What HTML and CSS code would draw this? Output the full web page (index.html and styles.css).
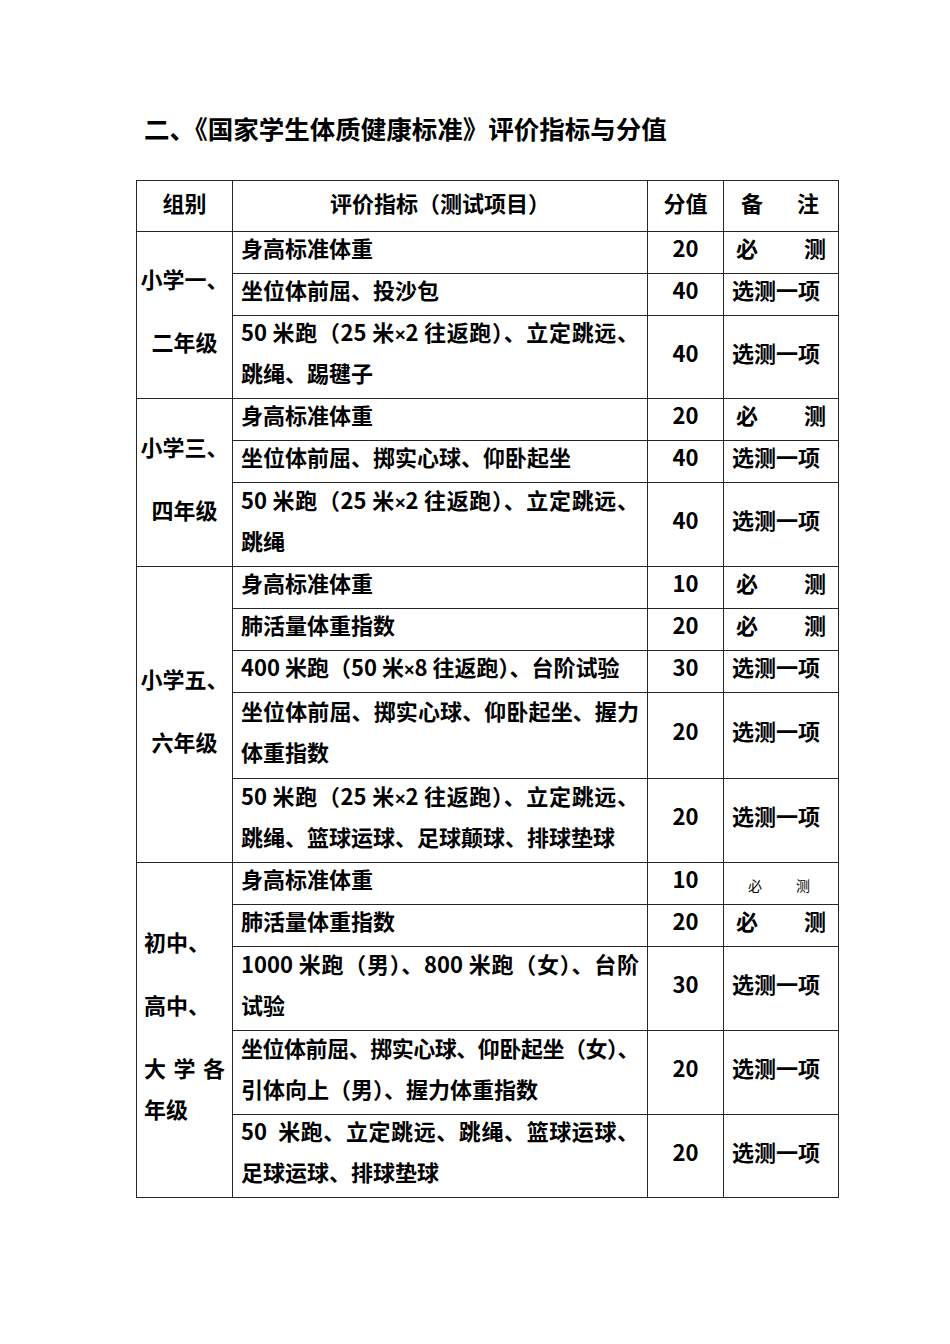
FILE: index.html
```html
<!DOCTYPE html>
<html lang="zh-CN">
<head>
<meta charset="utf-8">
<title>评价指标与分值</title>
<link rel="stylesheet" href="styles.css">
</head>
<body>
<div class="page">
  <h1 class="title">二、《国家学生体质健康标准》评价指标与分值</h1>
  <table class="tbl">
    <colgroup><col class="c1"><col class="c2"><col class="c3"><col class="c4"></colgroup>
    <thead>
      <tr class="h">
        <th><div class="in">组别</div></th>
        <th><div class="in">评价指标（测试项目）</div></th>
        <th><div class="in">分值</div></th>
        <th><div class="in sp hd"><span>备</span><span>注</span></div></th>
      </tr>
    </thead>
    <tbody>
      <!-- group 1 -->
      <tr class="s">
        <td rowspan="3" class="grp"><div class="in"><p>小学一、</p><p>二年级</p></div></td>
        <td class="item"><div class="in">身高标准体重</div></td>
        <td class="score"><div class="in">20</div></td>
        <td class="note"><div class="in sp"><span>必</span><span>测</span></div></td>
      </tr>
      <tr class="s">
        <td class="item"><div class="in">坐位体前屈、投沙包</div></td>
        <td class="score"><div class="in">40</div></td>
        <td class="note"><div class="in">选测一项</div></td>
      </tr>
      <tr class="d83">
        <td class="item"><div class="in"><span class="ln j">50 米跑（25 米<span class="x">×</span>2 往返跑）、立定跳远、</span><span class="ln">跳绳、踢毽子</span></div></td>
        <td class="score"><div class="in">40</div></td>
        <td class="note"><div class="in">选测一项</div></td>
      </tr>
      <!-- group 2 -->
      <tr class="s">
        <td rowspan="3" class="grp"><div class="in"><p>小学三、</p><p>四年级</p></div></td>
        <td class="item"><div class="in">身高标准体重</div></td>
        <td class="score"><div class="in">20</div></td>
        <td class="note"><div class="in sp"><span>必</span><span>测</span></div></td>
      </tr>
      <tr class="s">
        <td class="item"><div class="in">坐位体前屈、掷实心球、仰卧起坐</div></td>
        <td class="score"><div class="in">40</div></td>
        <td class="note"><div class="in">选测一项</div></td>
      </tr>
      <tr class="d">
        <td class="item"><div class="in"><span class="ln j">50 米跑（25 米<span class="x">×</span>2 往返跑）、立定跳远、</span><span class="ln">跳绳</span></div></td>
        <td class="score"><div class="in">40</div></td>
        <td class="note"><div class="in">选测一项</div></td>
      </tr>
      <!-- group 3 -->
      <tr class="s">
        <td rowspan="5" class="grp"><div class="in"><p>小学五、</p><p>六年级</p></div></td>
        <td class="item"><div class="in">身高标准体重</div></td>
        <td class="score"><div class="in">10</div></td>
        <td class="note"><div class="in sp"><span>必</span><span>测</span></div></td>
      </tr>
      <tr class="s">
        <td class="item"><div class="in">肺活量体重指数</div></td>
        <td class="score"><div class="in">20</div></td>
        <td class="note"><div class="in sp"><span>必</span><span>测</span></div></td>
      </tr>
      <tr class="s">
        <td class="item"><div class="in">400 米跑（50 米<span class="x">×</span>8 往返跑）、台阶试验</div></td>
        <td class="score"><div class="in">30</div></td>
        <td class="note"><div class="in">选测一项</div></td>
      </tr>
      <tr class="d86">
        <td class="item"><div class="in"><span class="ln j">坐位体前屈、掷实心球、仰卧起坐、握力</span><span class="ln">体重指数</span></div></td>
        <td class="score"><div class="in">20</div></td>
        <td class="note"><div class="in">选测一项</div></td>
      </tr>
      <tr class="d">
        <td class="item"><div class="in"><span class="ln j">50 米跑（25 米<span class="x">×</span>2 往返跑）、立定跳远、</span><span class="ln">跳绳、篮球运球、足球颠球、排球垫球</span></div></td>
        <td class="score"><div class="in">20</div></td>
        <td class="note"><div class="in">选测一项</div></td>
      </tr>
      <!-- group 4 -->
      <tr class="s">
        <td rowspan="5" class="grp left"><div class="in"><p>初中、</p><p>高中、</p><p><span class="ln j">大学各</span><span class="ln">年级</span></p></div></td>
        <td class="item"><div class="in">身高标准体重</div></td>
        <td class="score"><div class="in">10</div></td>
        <td class="note"><div class="in sp small"><span>必</span><span>测</span></div></td>
      </tr>
      <tr class="s">
        <td class="item"><div class="in">肺活量体重指数</div></td>
        <td class="score"><div class="in">20</div></td>
        <td class="note"><div class="in sp"><span>必</span><span>测</span></div></td>
      </tr>
      <tr class="d">
        <td class="item"><div class="in"><span class="ln j">1000 米跑（男）、800 米跑（女）、台阶</span><span class="ln">试验</span></div></td>
        <td class="score"><div class="in">30</div></td>
        <td class="note"><div class="in">选测一项</div></td>
      </tr>
      <tr class="d">
        <td class="item"><div class="in"><span class="ln j tight">坐位体前屈、掷实心球、仰卧起坐（女）、</span><span class="ln">引体向上（男）、握力体重指数</span></div></td>
        <td class="score"><div class="in">20</div></td>
        <td class="note"><div class="in">选测一项</div></td>
      </tr>
      <tr class="d83">
        <td class="item"><div class="in"><span class="ln j">50&nbsp; 米跑、立定跳远、跳绳、篮球运球、</span><span class="ln">足球运球、排球垫球</span></div></td>
        <td class="score"><div class="in">20</div></td>
        <td class="note"><div class="in">选测一项</div></td>
      </tr>
    </tbody>
  </table>
</div>
</body>
</html>
```

FILE: styles.css
```css
html, body {
  margin: 0;
  padding: 0;
  background: #ffffff;
}

body {
  font-family: "Noto Sans CJK SC", "Noto Sans", sans-serif;
  color: #000000;
}

.page {
  padding: 110px 0 0 136px;
}

.title {
  margin: 0 0 34px 8px;
  font-size: 25.5px;
  line-height: 36px;
  font-weight: 700;
  white-space: nowrap;
}

.tbl {
  border-collapse: collapse;
  table-layout: fixed;
  width: 702px;
  font-size: 22px;
  font-weight: 700;
}

.c1 { width: 96px; }
.c2 { width: 415px; }
.c3 { width: 76px; }
.c4 { width: 115px; }

.tbl th,
.tbl td {
  border: 1px solid #262626;
  padding: 0;
  vertical-align: middle;
  line-height: 41px;
  font-weight: 700;
}

.tbl th {
  text-align: center;
}

tr.h { height: 51px; }
tr.s { height: 42px; }
tr.d { height: 84px; }
tr.d83 { height: 83px; }
tr.d86 { height: 86px; }

.in {
  margin: -5px 0 5px;
}

.tbl th .in {
  margin: -4px 0 4px;
}

.grp {
  text-align: center;
  white-space: nowrap;
}

.grp p {
  margin: 0;
}

.grp p + p {
  margin-top: 22px;
}

.grp.left {
  text-align: left;
  padding: 0 7px;
}

.item {
  padding: 0 8px !important;
}

.ln {
  display: block;
  white-space: nowrap;
}

.j {
  text-align: justify;
  text-align-last: justify;
}

.x {
  font-family: "Liberation Sans", sans-serif;
  font-size: 18px;
  line-height: 1;
}

.tight {
  letter-spacing: -0.6px;
}

.score {
  text-align: center;
}

.note {
  padding: 0 0 0 8px !important;
}

.sp {
  display: flex;
  justify-content: space-between;
  padding: 0 12px 0 4px;
}

.hd {
  padding: 0 19px 0 17px;
}

.sp.small {
  font-size: 14px;
  font-weight: 400;
  margin: 2px 0 -2px;
  padding: 0 28px 0 16px;
}
```
